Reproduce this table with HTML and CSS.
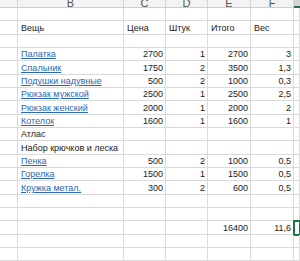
FILE: index.html
```html
<!DOCTYPE html>
<html>
<head>
<meta charset="utf-8">
<link rel="stylesheet" href="styles.css">
</head>
<body>
<div class="sheet">
  <div class="hd"></div><div class="hd">B</div><div class="hd">C</div><div class="hd">D</div><div class="hd">E</div><div class="hd">F</div><div class="hd hd-sel"></div>

  <div class="c"></div><div class="c"></div><div class="c"></div><div class="c"></div><div class="c"></div><div class="c"></div><div class="c"></div>

  <div class="c"></div><div class="c">Вещь</div><div class="c">Цена</div><div class="c">Штук</div><div class="c">Итого</div><div class="c">Вес</div><div class="c"></div>

  <div class="c"></div><div class="c"></div><div class="c"></div><div class="c"></div><div class="c"></div><div class="c"></div><div class="c"></div>

  <div class="c"></div><div class="c"><span class="lnk">Палатка</span></div><div class="c n">2700</div><div class="c n">1</div><div class="c n">2700</div><div class="c n">3</div><div class="c"></div>

  <div class="c"></div><div class="c"><span class="lnk">Спальник</span></div><div class="c n">1750</div><div class="c n">2</div><div class="c n">3500</div><div class="c n">1,3</div><div class="c"></div>

  <div class="c"></div><div class="c"><span class="lnk">Подушки надувные</span></div><div class="c n">500</div><div class="c n">2</div><div class="c n">1000</div><div class="c n">0,3</div><div class="c"></div>

  <div class="c"></div><div class="c"><span class="lnk">Рюкзак мужской</span></div><div class="c n">2500</div><div class="c n">1</div><div class="c n">2500</div><div class="c n">2,5</div><div class="c"></div>

  <div class="c"></div><div class="c"><span class="lnk">Рюкзак женский</span></div><div class="c n">2000</div><div class="c n">1</div><div class="c n">2000</div><div class="c n">2</div><div class="c"></div>

  <div class="c"></div><div class="c"><span class="lnk">Котелок</span></div><div class="c n">1600</div><div class="c n">1</div><div class="c n">1600</div><div class="c n">1</div><div class="c"></div>

  <div class="c"></div><div class="c">Атлас</div><div class="c"></div><div class="c"></div><div class="c"></div><div class="c"></div><div class="c"></div>

  <div class="c"></div><div class="c">Набор крючков и леска</div><div class="c"></div><div class="c"></div><div class="c"></div><div class="c"></div><div class="c"></div>

  <div class="c"></div><div class="c"><span class="lnk">Пенка</span></div><div class="c n">500</div><div class="c n">2</div><div class="c n">1000</div><div class="c n">0,5</div><div class="c"></div>

  <div class="c"></div><div class="c"><span class="lnk">Горелка</span></div><div class="c n">1500</div><div class="c n">1</div><div class="c n">1500</div><div class="c n">0,5</div><div class="c"></div>

  <div class="c"></div><div class="c"><span class="lnk">Кружка метал.</span></div><div class="c n">300</div><div class="c n">2</div><div class="c n">600</div><div class="c n">0,5</div><div class="c"></div>

  <div class="c"></div><div class="c"></div><div class="c"></div><div class="c"></div><div class="c"></div><div class="c"></div><div class="c"></div>

  <div class="c"></div><div class="c"></div><div class="c"></div><div class="c"></div><div class="c"></div><div class="c"></div><div class="c"></div>

  <div class="c"></div><div class="c"></div><div class="c"></div><div class="c"></div><div class="c n">16400</div><div class="c n">11,6</div><div class="c sel"></div>

  <div class="c"></div><div class="c"></div><div class="c"></div><div class="c"></div><div class="c"></div><div class="c"></div><div class="c"></div>

  <div class="c"></div><div class="c"></div><div class="c"></div><div class="c"></div><div class="c"></div><div class="c"></div><div class="c"></div>
</div>
</body>
</html>
```

FILE: styles.css
```css
html, body {
  margin: 0;
  padding: 0;
  background: #ffffff;
}
body {
  width: 300px;
  height: 261px;
  overflow: hidden;
}
.sheet {
  display: grid;
  grid-template-columns: 18px 106px 42px 42px 43px 43px 6px;
  grid-template-rows: 8px repeat(6, 13px 14px 13px) 13px;
  font-family: "Liberation Sans", Arial, sans-serif;
  font-size: 9px;
  color: #1a1a1a;
  width: 300px;
  overflow: hidden;
}
.hd {
  box-sizing: border-box;
  background: #f3f3f3;
  border-right: 1px solid #d6d6d6;
  border-bottom: 1px solid #cfcfcf;
  color: #555;
  font-size: 11px;
  line-height: 8px;
  text-align: center;
  overflow: hidden;
  display: flex;
  align-items: flex-end;
  justify-content: center;
}
.hd-sel {
  background: #d3d3d3;
  border-bottom: 2px solid #217346;
  border-right: none;
}
.c {
  box-sizing: border-box;
  border-right: 1px solid #dadada;
  border-bottom: 1px solid #dadada;
  padding: 0 2px 0 3px;
  display: flex;
  align-items: flex-end;
  white-space: nowrap;
  line-height: 11px;
  position: relative;
}
.n {
  justify-content: flex-end;
  padding-right: 2px;
}
.lnk {
  color: #2b68b2;
  text-decoration: underline;
}
.sel {
  outline: 2px solid #217346;
  outline-offset: -1px;
  border-right: none;
}
```
